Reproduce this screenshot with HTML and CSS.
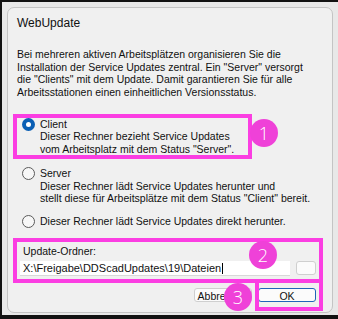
FILE: index.html
```
<!DOCTYPE html>
<html lang="de">
<head>
<meta charset="utf-8">
<title>WebUpdate</title>
<link rel="stylesheet" href="styles.css">
</head>
<body>
<div class="screen">
  <div class="dialog">
    <div class="title">WebUpdate</div>
    <p class="intro">Bei mehreren aktiven Arbeitsplätzen organisieren Sie die<br>Installation der Service Updates zentral. Ein "Server" versorgt<br>die "Clients" mit dem Update. Damit garantieren Sie für alle<br>Arbeitsstationen einen einheitlichen Versionsstatus.</p>
    <div class="options">
      <div class="option">
        <span class="radio checked"></span>
        <div class="opt-text">Client<br>Dieser Rechner bezieht Service Updates<br>vom Arbeitsplatz mit dem Status "Server".</div>
      </div>
      <div class="option">
        <span class="radio"></span>
        <div class="opt-text">Server<br>Dieser Rechner lädt Service Updates herunter und<br>stellt diese für Arbeitsplätze mit dem Status "Client" bereit.</div>
      </div>
      <div class="option option-last">
        <span class="radio"></span>
        <div class="opt-text">Dieser Rechner lädt Service Updates direkt herunter.</div>
      </div>
    </div>
    <div class="folder">
      <div class="folder-label">Update-Ordner:</div>
      <div class="folder-row">
        <div class="field">X:\Freigabe\DDScadUpdates\19\Dateien<span class="caret"></span></div>
        <div class="browse"></div>
      </div>
    </div>
    <div class="buttons">
      <div class="btn">Abbrechen</div>
      <div class="btn btn-default">OK</div>
    </div>
  </div>
  <div class="mark mark-1"></div>
  <div class="mark mark-2"></div>
  <div class="mark mark-3"></div>
  <div class="badge badge-1">1</div>
  <div class="badge badge-2">2</div>
  <div class="badge badge-3">3</div>
</div>
</body>
</html>
```
FILE: styles.css
```
html, body {
  margin: 0;
  padding: 0;
  background: #111;
}
.screen {
  position: relative;
  width: 338px;
  height: 319px;
  box-sizing: border-box;
  border-left: 2px solid #121212;
  border-top: 2px solid #121212;
  border-bottom: 4px solid #121212;
  background: #e8e8e8;
  padding: 5px 0 0 5px;
  overflow: hidden;
  font-family: "Liberation Sans", Arial, sans-serif;
  color: #111;
}
.dialog {
  width: 326px;
  height: 306px;
  box-sizing: border-box;
  border: 1px solid #c4c4c4;
  border-radius: 7px;
  background: #f0f0f0;
  padding: 7px 16px 0 9px;
}
.title {
  font-size: 12px;
  line-height: 16px;
  height: 16px;
}
.intro {
  margin: 17px 0 0 0;
  font-size: 10.5px;
  line-height: 12.5px;
  white-space: nowrap;
}
.options {
  margin: 19.5px 0 0 5px;
}
.option {
  display: flex;
  gap: 5px;
  font-size: 10.5px;
  line-height: 12.8px;
  margin-bottom: 11px;
  white-space: nowrap;
}
.option-last {
  margin-bottom: 0;
  margin-top: -1px;
}
.radio {
  flex: none;
  width: 13px;
  height: 13px;
  box-sizing: border-box;
  border-radius: 50%;
  border: 1px solid #5a5a5a;
  background: #f7f7f7;
}
.radio.checked {
  border: none;
  background: #0a5fb4;
  display: flex;
  align-items: center;
  justify-content: center;
}
.radio.checked::after {
  content: "";
  width: 5px;
  height: 5px;
  border-radius: 50%;
  background: #fff;
}
.folder {
  margin: 16.5px 0 0 3px;
}
.folder-label {
  font-size: 10.5px;
  line-height: 13px;
  padding-left: 3px;
}
.folder-row {
  display: flex;
  gap: 6px;
  margin-top: 3.5px;
  height: 15px;
}
.field {
  flex: 1;
  display: flex;
  align-items: center;
  background: #fff;
  border-bottom: 1px solid #d8d8d8;
  box-sizing: border-box;
  font-size: 11px;
  padding-left: 3px;
  white-space: nowrap;
}
.caret {
  display: inline-block;
  width: 1px;
  height: 11px;
  background: #000;
  margin-left: 1px;
}
.browse {
  width: 20px;
  height: 14px;
  box-sizing: border-box;
  border: 1px solid #cfcfcf;
  border-radius: 3px;
  background: #fbfbfb;
}
.buttons {
  display: flex;
  justify-content: flex-end;
  gap: 6px;
  margin-top: 12px;
}
.btn {
  width: 58px;
  height: 14px;
  box-sizing: border-box;
  border: 1px solid #cfcfcf;
  border-radius: 3px;
  background: #fbfbfb;
  font-size: 10.5px;
  line-height: 14px;
  text-align: center;
  overflow: hidden;
}
.btn-default {
  border: 1px solid #1f63b8;
  line-height: 15px;
}
.mark {
  position: absolute;
  box-sizing: border-box;
  border: 4px solid #fb3ee2;
}
.mark-1 {
  left: 11px;
  top: 112px;
  width: 239px;
  height: 45px;
}
.mark-2 {
  left: 11px;
  top: 236px;
  width: 310px;
  height: 45px;
}
.mark-3 {
  left: 253px;
  top: 277px;
  width: 68px;
  height: 32px;
}
.badge {
  position: absolute;
  width: 28px;
  height: 28px;
  border-radius: 50%;
  background: #ef41d8;
  color: #fff;
  font-family: "Open Sans", "Liberation Sans", sans-serif;
  font-weight: 300;
  font-size: 18px;
  line-height: 28px;
  text-align: center;
}
.badge-1 {
  left: 248px;
  top: 117px;
}
.badge-2 {
  left: 247px;
  top: 239px;
}
.badge-3 {
  left: 222px;
  top: 281px;
}
```
